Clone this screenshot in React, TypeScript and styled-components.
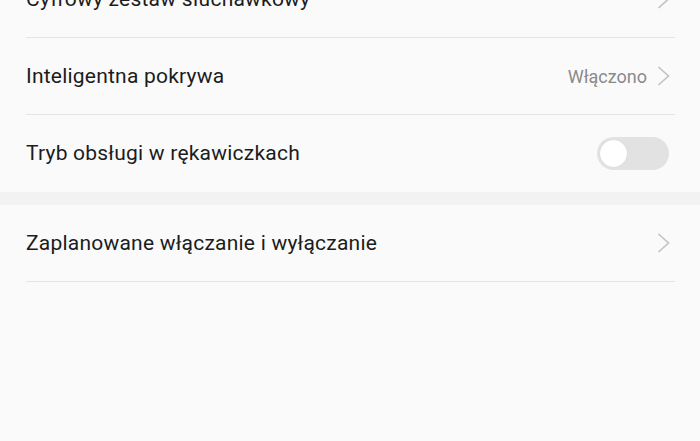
import React from "react";
import styled, { createGlobalStyle } from "styled-components";

const Global = createGlobalStyle`
  html, body { margin: 0; padding: 0; background: #fafafa; }
  body { font-family: Roboto, "Noto Sans", sans-serif; overflow: hidden; }
`;

const Page = styled.div`
  width: 700px;
  height: 441px;
  background: #fafafa;
  overflow: hidden;
`;

const Group = styled.div<{ $offset?: number }>`
  display: flex;
  flex-direction: column;
  margin-top: ${(p) => p.$offset ?? 0}px;
`;

const Row = styled.div<{ $divider: boolean }>`
  display: flex;
  align-items: center;
  justify-content: space-between;
  height: 76px;
  margin: 0 25px 0 26px;
  padding-right: 5px;
  border-bottom: 1px solid ${(p) => (p.$divider ? "#e4e4e4" : "transparent")};
`;

const Label = styled.span`
  font-size: 21px;
  color: #1c1c1c;
  letter-spacing: 0.22px;
`;

const Right = styled.div`
  display: flex;
  align-items: center;
  gap: 10px;
`;

const Value = styled.span`
  font-size: 18px;
  color: #8a8a8a;
`;

const SectionGap = styled.div`
  height: 13px;
  background: #f2f2f2;
`;

const Track = styled.div`
  width: 72px;
  height: 33px;
  margin-right: 1px;
  border-radius: 17px;
  background: #e2e2e2;
  display: flex;
  align-items: center;
  padding-left: 3px;
  box-sizing: border-box;
`;

const Knob = styled.div`
  width: 27px;
  height: 27px;
  border-radius: 50%;
  background: #ffffff;
  box-shadow: 0 0 1px rgba(0, 0, 0, 0.15);
`;

const Chevron = () => (
  <svg width="13" height="20" viewBox="0 0 13 20" fill="none">
    <polyline points="1.5,1 11.5,10 1.5,19" stroke="#c2c2c2" strokeWidth="1.6" strokeLinejoin="miter" />
  </svg>
);

type Item = { label: string; value?: string; kind: "chevron" | "toggle"; divider: boolean };

const first: Item[] = [
  { label: "Cyfrowy zestaw słuchawkowy", kind: "chevron", divider: true },
  { label: "Inteligentna pokrywa", value: "Włączono", kind: "chevron", divider: true },
  { label: "Tryb obsługi w rękawiczkach", kind: "toggle", divider: false },
];

const second: Item[] = [
  { label: "Zaplanowane włączanie i wyłączanie", kind: "chevron", divider: true },
];

const SettingRow = ({ item }: { item: Item }) => (
  <Row $divider={item.divider}>
    <Label>{item.label}</Label>
    <Right>
      {item.value && <Value>{item.value}</Value>}
      {item.kind === "chevron" ? (
        <Chevron />
      ) : (
        <Track>
          <Knob />
        </Track>
      )}
    </Right>
  </Row>
);

export default function App() {
  return (
    <Page>
      <Global />
      <Group $offset={-39}>
        {first.map((it) => (
          <SettingRow key={it.label} item={it} />
        ))}
      </Group>
      <SectionGap />
      <Group>
        {second.map((it) => (
          <SettingRow key={it.label} item={it} />
        ))}
      </Group>
    </Page>
  );
}
